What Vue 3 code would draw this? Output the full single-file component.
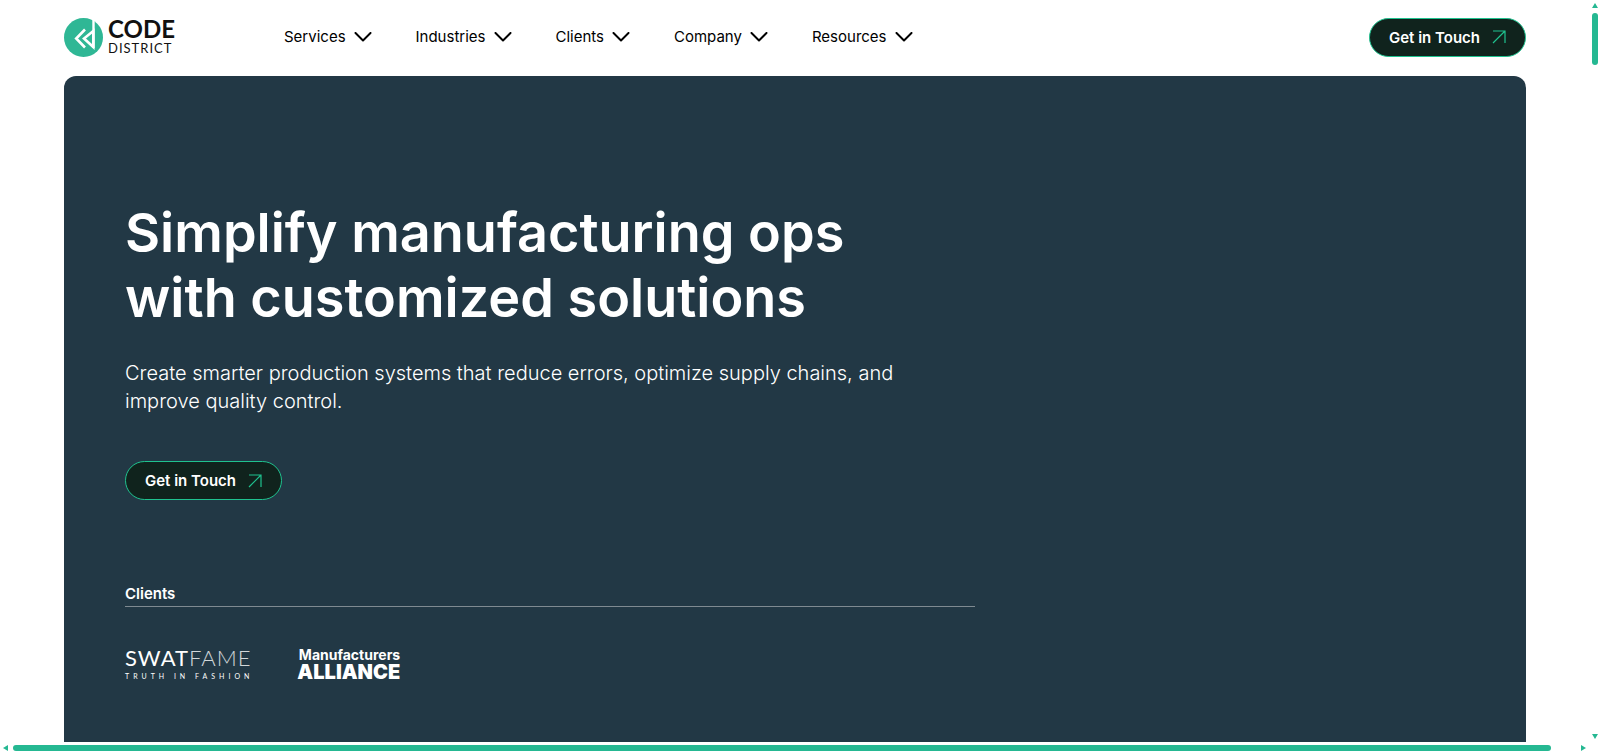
<template>
  <div class="viewport">
    <div class="page">
      <header class="header">
        <a class="brand" href="#" aria-label="Code District">
          <svg class="brand-mark" viewBox="0 0 39 39" width="39" height="39">
            <circle cx="19.5" cy="19.5" r="19.5" fill="#2fb795"/>
            <path d="M29.5 0v30" fill="none" stroke="#fff" stroke-width="2.4"/>
            <path d="M21 11.5L12.2 20.5L21 29.5" fill="none" stroke="#fff" stroke-width="2.6"/>
            <path d="M29.3 13L20 20.5L29.3 29Z" fill="none" stroke="#fff" stroke-width="2.6"/>
          </svg>
          <span class="brand-text">
            <span class="brand-code">CODE</span>
            <span class="brand-district">DISTRICT</span>
          </span>
        </a>
        <nav class="nav">
          <button v-for="item in navItems" :key="item" class="nav-item" type="button">
            {{ item }}
            <svg viewBox="0 0 18 10" width="18" height="10" fill="none" stroke="currentColor" stroke-width="2" stroke-linecap="round" stroke-linejoin="round">
              <path d="M1.5 1L9 8.5L16.5 1"/>
            </svg>
          </button>
        </nav>
        <a class="cta" href="#contact">
          Get in Touch
          <svg viewBox="0 0 14 14" width="14" height="14" fill="none" stroke="currentColor" stroke-width="1.2">
            <path d="M1 1h12v12M13 1L1 13"/>
          </svg>
        </a>
      </header>

      <main class="hero">
        <div class="hero-content">
          <h1>Simplify manufacturing ops with customized solutions</h1>
          <p class="hero-lead">
            Create smarter production systems that reduce errors, optimize supply chains, and improve quality control.
          </p>
          <a class="cta" href="#contact">
            Get in Touch
            <svg viewBox="0 0 14 14" width="14" height="14" fill="none" stroke="currentColor" stroke-width="1.2">
              <path d="M1 1h12v12M13 1L1 13"/>
            </svg>
          </a>
          <section class="clients">
            <h2>Clients</h2>
            <div class="client-logos">
              <div class="swatfame">
                <span class="swatfame-name">SWAT<span>FAME</span></span>
                <span class="swatfame-tag">TRUTH IN FASHION</span>
              </div>
              <div class="alliance">
                <span class="alliance-top">Manufacturers</span>
                <span class="alliance-name">ALLIANCE</span>
              </div>
            </div>
          </section>
        </div>
      </main>
    </div>

    <!-- Scrollbars -->
    <div class="bar bar-y" aria-hidden="true">
      <i class="arrow up"></i>
      <i class="thumb"></i>
      <i class="arrow down"></i>
    </div>
    <div class="bar bar-x" aria-hidden="true">
      <i class="arrow left"></i>
      <i class="thumb"></i>
      <i class="arrow right"></i>
    </div>
  </div>
</template>

<script setup>
const navItems = ['Services', 'Industries', 'Clients', 'Company', 'Resources']
</script>

<style>
body {
  margin: 0;
  background: #fff;
}
</style>

<style scoped>
.viewport {
  display: grid;
  grid-template-columns: 1fr 10px;
  grid-template-rows: 1fr 11px;
  min-height: 100vh;
  font-family: Inter, "Liberation Sans", sans-serif;
  color: #000;
}

.page {
  display: flex;
  flex-direction: column;
  padding: 0 64px;
}

/* Header */
.header {
  display: flex;
  align-items: center;
  box-sizing: border-box;
  height: 76px;
  padding-bottom: 2px;
}

.brand {
  display: flex;
  align-items: center;
  gap: 5px;
  width: 220px;
  color: #111;
  text-decoration: none;
}

.brand-text {
  display: flex;
  flex-direction: column;
  font-family: Lato, sans-serif;
}

.brand-code {
  font-size: 24px;
  line-height: 22px;
  font-weight: 700;
}

.brand-district {
  font-size: 13px;
  line-height: 16px;
  letter-spacing: 1px;
}

.nav {
  display: flex;
  gap: 44px;
}

.nav-item {
  display: flex;
  align-items: center;
  gap: 8px;
  padding: 0;
  border: 0;
  background: none;
  font: inherit;
  font-size: 15px;
  line-height: 24px;
  color: inherit;
  cursor: pointer;
}

.cta {
  display: inline-flex;
  align-items: center;
  gap: 12px;
  box-sizing: border-box;
  height: 39px;
  padding: 0 19px;
  border: 1px solid #1fc28f;
  border-radius: 20px;
  background: #10231d;
  color: #fff;
  font-size: 15px;
  font-weight: 600;
  text-decoration: none;
}

.cta svg {
  color: #1fc28f;
}

.header .cta {
  margin-left: auto;
}

/* Hero */
.hero {
  flex: 1;
  border-radius: 12px 12px 0 0;
  background: #223845;
  color: #fff;
}

.hero-content {
  max-width: 850px;
  padding: 124px 61px 40px;
}

h1 {
  margin: 0;
  max-width: 760px;
  font-size: 54px;
  line-height: 65px;
  font-weight: 600;
}

.hero-lead {
  margin: 29px 0 46px;
  max-width: 780px;
  font-size: 20px;
  line-height: 28px;
  font-weight: 300;
}

/* Clients */
.clients {
  margin-top: 82px;
}

.clients h2 {
  margin: 0;
  border-bottom: 1px solid #7f8a91;
  font-size: 15px;
  line-height: 24px;
  font-weight: 600;
}

.client-logos {
  display: flex;
  align-items: flex-start;
  gap: 44px;
  margin-top: 40px;
}

.swatfame {
  display: flex;
  flex-direction: column;
  font-family: Lato, sans-serif;
}

.swatfame-name {
  font-size: 22px;
  line-height: 22px;
  letter-spacing: 1px;
}

.swatfame-name span {
  font-weight: 300;
  opacity: 0.8;
}

.swatfame-tag {
  font-size: 7px;
  line-height: 14px;
  letter-spacing: 4px;
}

.alliance {
  display: flex;
  flex-direction: column;
  align-items: flex-end;
}

.alliance-top {
  font-size: 14px;
  line-height: 16px;
  font-weight: 700;
}

.alliance-name {
  font-size: 20px;
  line-height: 18px;
  font-weight: 900;
}

/* Scrollbars */
.bar {
  display: flex;
  align-items: center;
  justify-content: space-between;
}

.bar-y {
  flex-direction: column;
  padding: 3px 0;
}

.bar-x {
  padding: 0 4px 0 3px;
}

.thumb {
  border-radius: 3px;
  background: #25b892;
}

.bar-y .thumb {
  width: 6px;
  height: 52px;
  margin: 5px 0 auto;
}

.bar-x .thumb {
  flex: 1;
  height: 6px;
  margin: 0 30px 0 5px;
}

.arrow {
  border: 3px solid transparent;
}

.up {
  border-top: 0;
  border-bottom: 5px solid #25b892;
}

.down {
  border-bottom: 0;
  border-top: 5px solid #25b892;
}

.left {
  border-left: 0;
  border-right: 5px solid #25b892;
}

.right {
  border-right: 0;
  border-left: 5px solid #25b892;
}
</style>
